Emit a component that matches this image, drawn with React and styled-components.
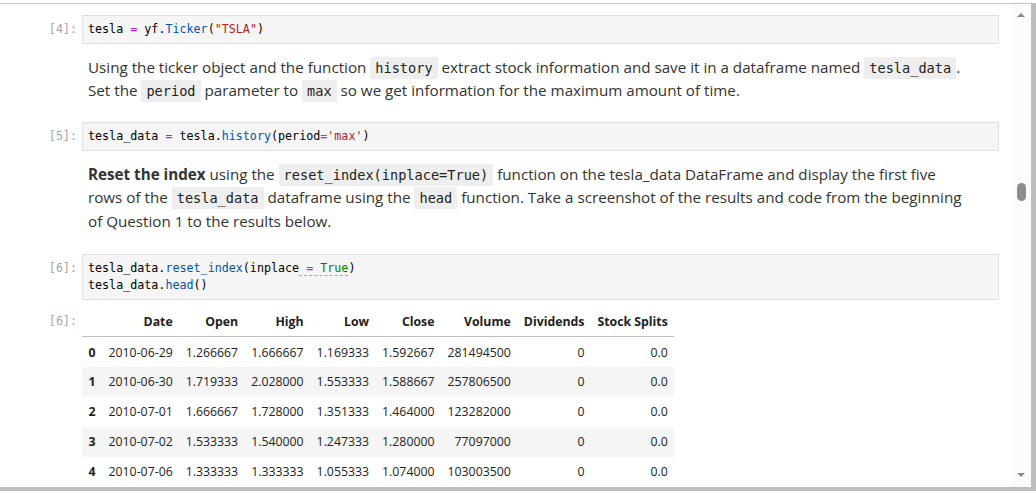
import styled, { createGlobalStyle } from "styled-components";

const GlobalStyle = createGlobalStyle`
  html, body {
    margin: 0;
    padding: 0;
    background: #fff;
  }
  body {
    font-family: "Open Sans", "Noto Sans", sans-serif;
  }
`;

const Frame = styled.div`
  width: 1036px;
  height: 491px;
  display: flex;
  flex-direction: column;
  box-sizing: border-box;
  padding-top: 3px;
  overflow: hidden;
`;

const Body = styled.div`
  flex: 1;
  display: flex;
  border-top: 1px solid #c6c6c6;
  border-right: 5px solid #bdbdbd;
  min-height: 0;
`;

const Content = styled.div`
  flex: 1;
  padding: 11px 12px 0 0;
  overflow: hidden;
`;

const BottomBar = styled.div`
  height: 4px;
  background: #bdbdbd;
`;

const Scrollbar = styled.div`
  width: 20px;
  background: #fbfbfb;
  display: flex;
  flex-direction: column;
  align-items: center;
  justify-content: space-between;
  padding: 9px 0 10px;
  box-sizing: border-box;
  position: relative;
`;

const Arrow = styled.div`
  width: 0;
  height: 0;
  border-left: 4px solid transparent;
  border-right: 4px solid transparent;
  ${(p) =>
    p.$down
      ? "border-top: 4px solid #8a8a8a;"
      : "border-bottom: 4px solid #8a8a8a;"}
`;

const Thumb = styled.div`
  position: absolute;
  top: 179px;
  left: 6px;
  width: 9px;
  height: 18px;
  border-radius: 5px;
  background: #8c8c8c;
`;

const Cell = styled.div`
  display: flex;
  align-items: flex-start;
  margin-bottom: ${(p) => p.$gap || 0}px;
`;

const Prompt = styled.div`
  width: 82px;
  flex: none;
  box-sizing: border-box;
  padding: ${(p) => p.$top || 6}px 5px 0 0;
  text-align: right;
  font-family: "DejaVu Sans Mono", monospace;
  font-size: 11.7px;
  line-height: 17px;
  color: #a3a3a3;
`;

const CodeBox = styled.div`
  flex: 1;
  background: #f5f5f5;
  border: 1px solid #e0e0e0;
  padding: 5px;
  font-family: "DejaVu Sans Mono", monospace;
  font-size: 11.7px;
  line-height: 17px;
  color: #000;
  white-space: pre;
`;

const Op = styled.span`
  color: #aa22ff;
`;
const Prop = styled.span`
  color: #0055aa;
`;
const Str = styled.span`
  color: #ba2121;
`;
const Kw = styled.span`
  color: #008000;
`;
const Lint = styled.span`
  border-bottom: 1px dashed #e0a030;
`;

const Markdown = styled.div`
  flex: 1;
  padding: 0 25px 0 6px;
  font-size: 15.2px;
  line-height: 23.4px;
  color: #333;
`;

const InlineCode = styled.code`
  font-family: "DejaVu Sans Mono", monospace;
  font-size: 13.6px;
  line-height: 1;
  background: #eeeeee;
  padding: 3px 5px;
  color: #222;
`;

const Table = styled.table`
  border-collapse: collapse;
  font-size: 12.3px;
  color: #222;
  font-family: "Open Sans", "Noto Sans", sans-serif;
`;

const Th = styled.th`
  text-align: right;
  font-weight: 700;
  padding: 5px 6.5px 6px;
  border-bottom: 1px solid #bdbdbd;
  white-space: nowrap;
`;

const Row = styled.tr`
  background: ${(p) => (p.$striped ? "#f5f5f5" : "#fff")};
  height: 30px;
`;

const Td = styled.td`
  text-align: right;
  padding: ${(p) => (p.$first ? "2px" : "0")} 6.5px 0;
  white-space: nowrap;
  font-weight: ${(p) => (p.$index ? 700 : 400)};
`;

const columns = ["", "Date", "Open", "High", "Low", "Close", "Volume", "Dividends", "Stock Splits"];

const rows = [
  ["0", "2010-06-29", "1.266667", "1.666667", "1.169333", "1.592667", "281494500", "0", "0.0"],
  ["1", "2010-06-30", "1.719333", "2.028000", "1.553333", "1.588667", "257806500", "0", "0.0"],
  ["2", "2010-07-01", "1.666667", "1.728000", "1.351333", "1.464000", "123282000", "0", "0.0"],
  ["3", "2010-07-02", "1.533333", "1.540000", "1.247333", "1.280000", "77097000", "0", "0.0"],
  ["4", "2010-07-06", "1.333333", "1.333333", "1.055333", "1.074000", "103003500", "0", "0.0"],
];

export default function App() {
  return (
    <>
      <GlobalStyle />
      <Frame>
        <Body>
          <Content>
            <Cell $gap={12}>
              <Prompt>[4]:</Prompt>
              <CodeBox>
                tesla <Op>=</Op> yf.<Prop>Ticker</Prop>(<Str>"TSLA"</Str>)
              </CodeBox>
            </Cell>

            <Cell $gap={19}>
              <Prompt />
              <Markdown>
                Using the ticker object and the function <InlineCode>history</InlineCode> extract stock
                information and save it in a dataframe named <InlineCode>tesla_data</InlineCode>.
                <br />
                Set the <InlineCode>period</InlineCode> parameter to <InlineCode>max</InlineCode> so we
                get information for the maximum amount of time.
              </Markdown>
            </Cell>

            <Cell $gap={12}>
              <Prompt>[5]:</Prompt>
              <CodeBox>
                tesla_data <Op>=</Op> tesla.<Prop>history</Prop>(period<Op>=</Op>
                <Str>'max'</Str>)
              </CodeBox>
            </Cell>

            <Cell $gap={21}>
              <Prompt />
              <Markdown>
                <b>Reset the index</b> using the <InlineCode>reset_index(inplace=True)</InlineCode>{" "}
                function on the tesla_data DataFrame and display the first five rows of the{" "}
                <InlineCode>tesla_data</InlineCode> dataframe using the <InlineCode>head</InlineCode>{" "}
                function. Take a screenshot of the results and code from the beginning of Question 1
                to the results below.
              </Markdown>
            </Cell>

            <Cell $gap={8}>
              <Prompt>[6]:</Prompt>
              <CodeBox>
                tesla_data.<Prop>reset_index</Prop>(inplace
                <Lint>
                  {" "}
                  <Op>=</Op> <Kw>True</Kw>
                </Lint>
                ){"\n"}tesla_data.<Prop>head</Prop>()
              </CodeBox>
            </Cell>

            <Cell>
              <Prompt $top={5}>[6]:</Prompt>
              <Table>
                <thead>
                  <tr>
                    {columns.map((c, i) => (
                      <Th key={i}>{c}</Th>
                    ))}
                  </tr>
                </thead>
                <tbody>
                  {rows.map((r, i) => (
                    <Row key={i} $striped={i % 2 === 1}>
                      {r.map((v, j) => (
                        <Td key={j} $index={j === 0} $first={i === 0}>
                          {v}
                        </Td>
                      ))}
                    </Row>
                  ))}
                </tbody>
              </Table>
            </Cell>
          </Content>
          <Scrollbar>
            <Arrow />
            <Thumb />
            <Arrow $down />
          </Scrollbar>
        </Body>
        <BottomBar />
      </Frame>
    </>
  );
}
